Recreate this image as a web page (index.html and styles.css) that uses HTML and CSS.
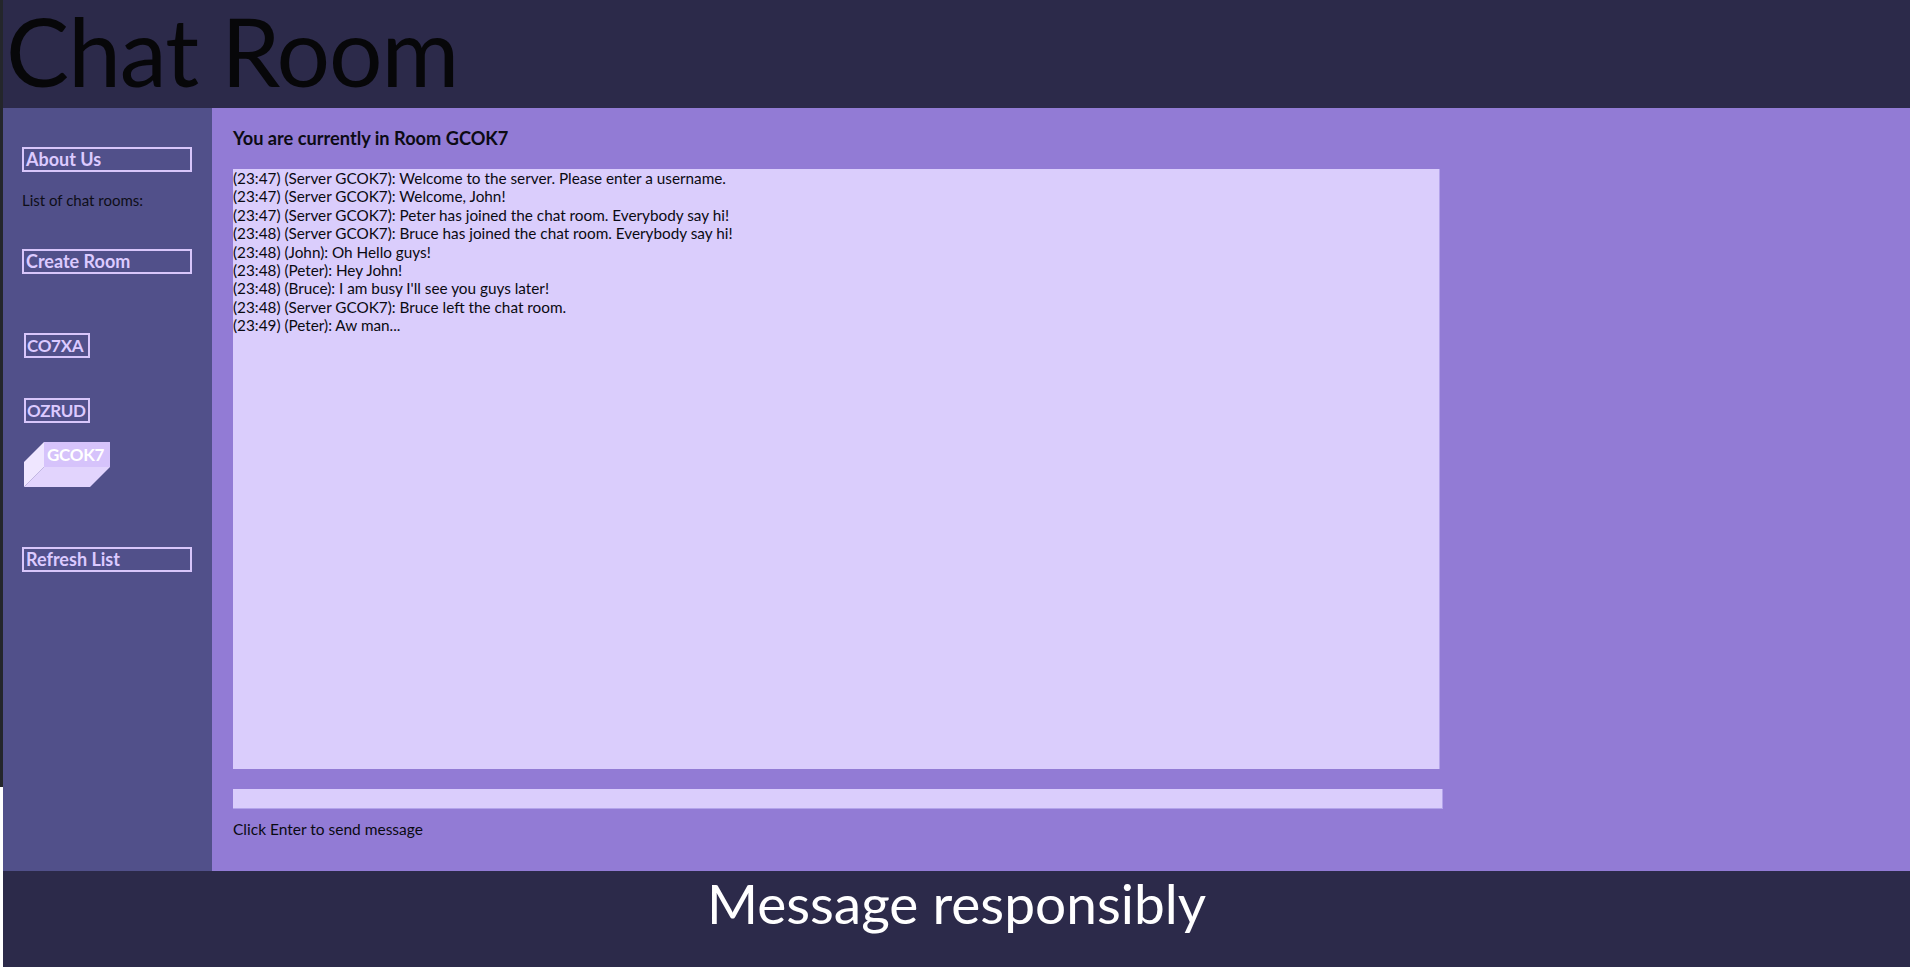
FILE: index.html
```html
<!DOCTYPE html>
<html lang="en">
<head>
<meta charset="utf-8">
<title>Chat Room</title>
<link rel="stylesheet" href="styles.css">
</head>
<body>
<div class="page">
  <header class="top">
    <h1 class="title">Chat Room</h1>
  </header>
  <div class="content">
    <aside class="sidebar">
      <button class="wide-btn about">About Us</button>
      <p class="list-label">List of chat rooms:</p>
      <button class="wide-btn create">Create Room</button>
      <div class="rooms">
        <button class="room">CO7XA</button>
        <button class="room">OZRUD</button>
        <button class="room active">GCOK7</button>
      </div>
      <button class="wide-btn refresh">Refresh List</button>
    </aside>
    <main class="main">
      <h2 class="room-title">You are currently in Room GCOK7</h2>
      <div class="chat-log">
        <div class="msg">(23:47) (Server GCOK7): Welcome to the server. Please enter a username.</div>
        <div class="msg">(23:47) (Server GCOK7): Welcome, John!</div>
        <div class="msg">(23:47) (Server GCOK7): Peter has joined the chat room. Everybody say hi!</div>
        <div class="msg">(23:48) (Server GCOK7): Bruce has joined the chat room. Everybody say hi!</div>
        <div class="msg">(23:48) (John): Oh Hello guys!</div>
        <div class="msg">(23:48) (Peter): Hey John!</div>
        <div class="msg">(23:48) (Bruce): I am busy I'll see you guys later!</div>
        <div class="msg">(23:48) (Server GCOK7): Bruce left the chat room.</div>
        <div class="msg">(23:49) (Peter): Aw man...</div>
      </div>
      <input class="msg-input" type="text" aria-label="Message">
      <p class="hint">Click Enter to send message</p>
    </main>
  </div>
  <footer class="bottom">
    <p class="motto">Message responsibly</p>
  </footer>
</div>
</body>
</html>
```
FILE: styles.css
```css
html, body {
  margin: 0;
  padding: 0;
}
body {
  background: linear-gradient(to bottom, #24262b 0, #24262b 787px, #ffffff 787px);
  font-family: "Lato", "Open Sans", sans-serif;
  color: #0b0b0f;
}
.page {
  margin-left: 3px;
  width: 1907px;
}
.top {
  height: 108px;
  background: #2c2a4a;
}
.title {
  margin: 0;
  padding-left: 3px;
  font-size: 94.5px;
  font-weight: 400;
  line-height: 102px;
  color: #070709;
  letter-spacing: -1px;
}
.content {
  display: flex;
  height: 763px;
}
.sidebar {
  width: 209px;
  flex: none;
  background: #51508a;
  padding: 39px 0 0 19px;
  box-sizing: border-box;
  display: flex;
  flex-direction: column;
  align-items: flex-start;
}
button {
  font-family: inherit;
  font-weight: 700;
  font-size: 18px;
  color: #dccaff;
  background: transparent;
  border: 2px solid #d8c6fb;
  padding: 0 2px;
  margin: 0;
  box-sizing: border-box;
  height: 25px;
  line-height: 21px;
  text-align: left;
  cursor: pointer;
}
.wide-btn {
  width: 170px;
}
.list-label {
  margin: 18px 0 0;
  font-size: 15px;
  line-height: 20px;
  color: #0e0e18;
}
.create {
  margin-top: 39px;
}
.rooms {
  margin-top: 59px;
  padding-left: 2px;
  display: flex;
  flex-direction: column;
  align-items: flex-start;
  gap: 40px;
}
.room {
  width: 66px;
  padding: 0 0 0 1px;
  font-size: 17px;
  letter-spacing: -0.3px;
  white-space: nowrap;
}
.room.active {
  position: relative;
  transform: translate(20px, -20px);
  background: #d6c3fb;
  border-color: #d6c3fb;
  color: #ffffff;
  margin-top: -1px;
}
.room.active::before {
  content: "";
  position: absolute;
  left: -22px;
  top: -2px;
  width: 20px;
  height: 45px;
  background: #efe6ff;
  clip-path: polygon(100% 0, 0 20px, 0 100%, 100% 25px);
}
.room.active::after {
  content: "";
  position: absolute;
  left: -22px;
  top: 23px;
  width: 86px;
  height: 20px;
  background: #e2d4fd;
  clip-path: polygon(20px 0, 100% 0, 66px 100%, 0 100%);
}
.refresh {
  margin-top: 60px;
}
.main {
  flex: 1;
  background: #927bd5;
  padding: 19px 0 0 21px;
  box-sizing: border-box;
}
.room-title {
  margin: 0;
  font-size: 18.2px;
  font-weight: 700;
  line-height: 23px;
  color: #0c0b14;
}
.chat-log {
  margin-top: 19px;
  width: 1207px;
  height: 600px;
  box-sizing: border-box;
  background: #dacdfc;
  border-right: 1px solid #b3a3ea;
  font-size: 15.3px;
  line-height: 18.4px;
  color: #0a0a12;
  overflow: hidden;
}
.msg-input {
  display: block;
  margin: 20px 0 0;
  width: 1210px;
  height: 20px;
  box-sizing: border-box;
  border: none;
  border-right: 1px solid #b3a3ea;
  border-bottom: 1px solid #b3a3ea;
  background: #dacdfc;
  padding: 0;
  font-family: inherit;
}
.hint {
  margin: 10px 0 0;
  font-size: 15.5px;
  line-height: 20px;
  color: #0a0a12;
}
.bottom {
  height: 96px;
  background: #2c2a4a;
  overflow: hidden;
}
.motto {
  margin: 0;
  padding-top: 0;
  text-align: center;
  font-size: 55px;
  line-height: 64px;
  color: #ffffff;
}
```
